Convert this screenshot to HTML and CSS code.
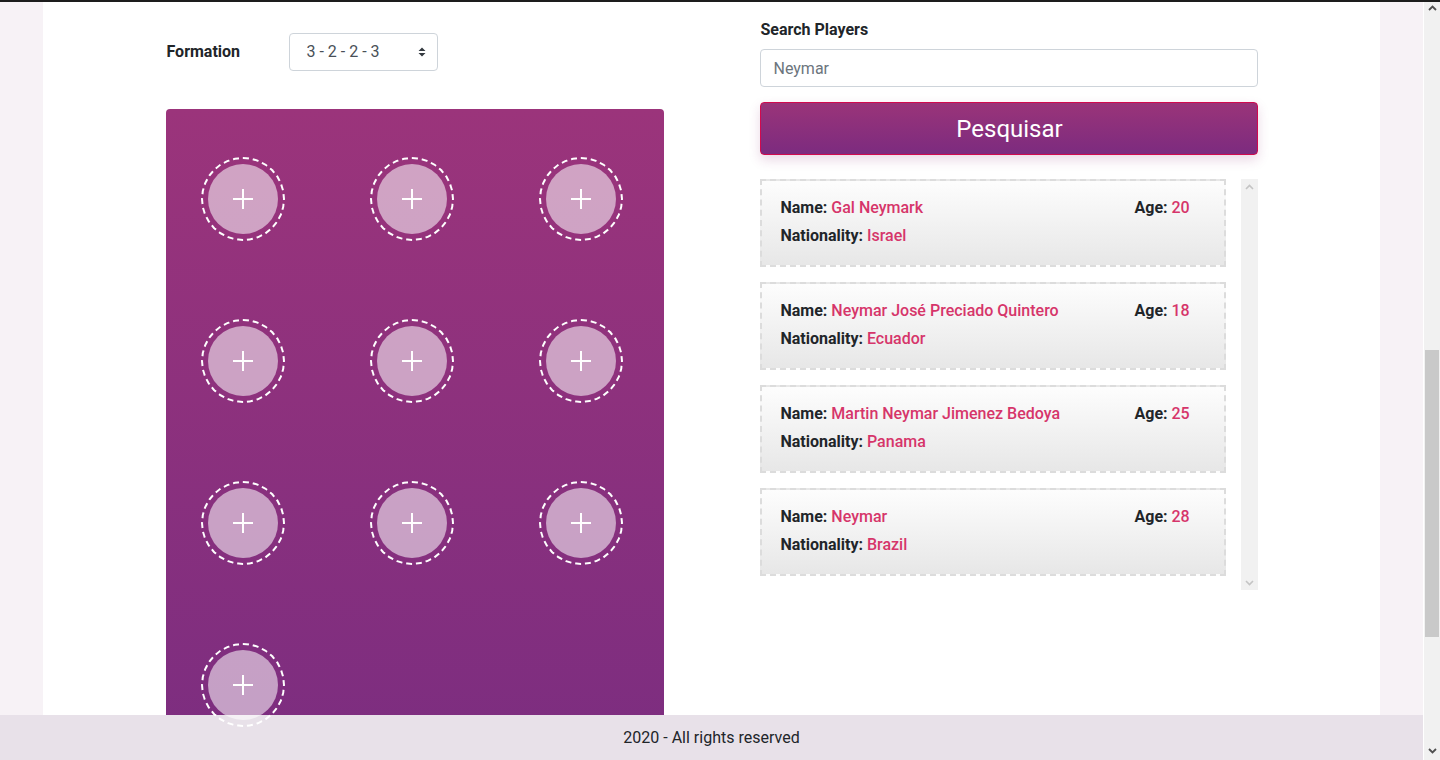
FILE: index.html
```html
<!DOCTYPE html>
<html lang="en">
<head>
<meta charset="utf-8">
<title>Team Builder</title>
<link rel="stylesheet" href="styles.css">
</head>
<body>
<div class="topline"></div>
<div class="viewport">
  <div class="page">
    <main class="main">
      <section class="left">
        <div class="formation-row">
          <label class="formation-label" for="formation">Formation</label>
          <div class="select-wrap">
            <select id="formation" class="select">
              <option>3 - 2 - 2 - 3</option>
              <option>3 - 4 - 3</option>
              <option>4 - 4 - 2</option>
            </select>
            <svg class="select-arrows" width="10" height="12" viewBox="0 0 10 12"><path d="M1.5 5 L5 1.5 L8.5 5 Z M1.5 7 L5 10.5 L8.5 7 Z" fill="#343a40"/></svg>
          </div>
        </div>
        <div class="field">
          <div class="slot"><div class="slot-inner"><svg width="22" height="22" viewBox="0 0 22 22"><path d="M11 1 V21 M1 11 H21" stroke="#fff" stroke-width="2"/></svg></div></div>
          <div class="slot"><div class="slot-inner"><svg width="22" height="22" viewBox="0 0 22 22"><path d="M11 1 V21 M1 11 H21" stroke="#fff" stroke-width="2"/></svg></div></div>
          <div class="slot"><div class="slot-inner"><svg width="22" height="22" viewBox="0 0 22 22"><path d="M11 1 V21 M1 11 H21" stroke="#fff" stroke-width="2"/></svg></div></div>
          <div class="slot"><div class="slot-inner"><svg width="22" height="22" viewBox="0 0 22 22"><path d="M11 1 V21 M1 11 H21" stroke="#fff" stroke-width="2"/></svg></div></div>
          <div class="slot"><div class="slot-inner"><svg width="22" height="22" viewBox="0 0 22 22"><path d="M11 1 V21 M1 11 H21" stroke="#fff" stroke-width="2"/></svg></div></div>
          <div class="slot"><div class="slot-inner"><svg width="22" height="22" viewBox="0 0 22 22"><path d="M11 1 V21 M1 11 H21" stroke="#fff" stroke-width="2"/></svg></div></div>
          <div class="slot"><div class="slot-inner"><svg width="22" height="22" viewBox="0 0 22 22"><path d="M11 1 V21 M1 11 H21" stroke="#fff" stroke-width="2"/></svg></div></div>
          <div class="slot"><div class="slot-inner"><svg width="22" height="22" viewBox="0 0 22 22"><path d="M11 1 V21 M1 11 H21" stroke="#fff" stroke-width="2"/></svg></div></div>
          <div class="slot"><div class="slot-inner"><svg width="22" height="22" viewBox="0 0 22 22"><path d="M11 1 V21 M1 11 H21" stroke="#fff" stroke-width="2"/></svg></div></div>
          <div class="slot"><div class="slot-inner"><svg width="22" height="22" viewBox="0 0 22 22"><path d="M11 1 V21 M1 11 H21" stroke="#fff" stroke-width="2"/></svg></div></div>
        </div>
      </section>
      <section class="right">
        <label class="search-label" for="search">Search Players</label>
        <input id="search" class="search-input" type="text" placeholder="Neymar">
        <button class="search-btn" type="button">Pesquisar</button>
        <div class="results">
          <div class="results-list">
            <div class="card">
              <div class="card-main">
                <div class="line"><b>Name:</b> <span class="val">Gal Neymark</span></div>
                <div class="line"><b>Nationality:</b> <span class="val">Israel</span></div>
              </div>
              <div class="card-age"><b>Age:</b> <span class="val">20</span></div>
            </div>
            <div class="card">
              <div class="card-main">
                <div class="line"><b>Name:</b> <span class="val">Neymar José Preciado Quintero</span></div>
                <div class="line"><b>Nationality:</b> <span class="val">Ecuador</span></div>
              </div>
              <div class="card-age"><b>Age:</b> <span class="val">18</span></div>
            </div>
            <div class="card">
              <div class="card-main">
                <div class="line"><b>Name:</b> <span class="val">Martin Neymar Jimenez Bedoya</span></div>
                <div class="line"><b>Nationality:</b> <span class="val">Panama</span></div>
              </div>
              <div class="card-age"><b>Age:</b> <span class="val">25</span></div>
            </div>
            <div class="card">
              <div class="card-main">
                <div class="line"><b>Name:</b> <span class="val">Neymar</span></div>
                <div class="line"><b>Nationality:</b> <span class="val">Brazil</span></div>
              </div>
              <div class="card-age"><b>Age:</b> <span class="val">28</span></div>
            </div>
          </div>
          <div class="mini-track">
            <svg width="9" height="6" viewBox="0 0 9 6"><path d="M1 5 L4.5 1.5 L8 5" fill="none" stroke="#c4c4c4" stroke-width="1.6"/></svg>
            <svg width="9" height="6" viewBox="0 0 9 6"><path d="M1 1 L4.5 4.5 L8 1" fill="none" stroke="#c4c4c4" stroke-width="1.6"/></svg>
          </div>
        </div>
      </section>
    </main>
  </div>
  <footer class="footer">2020 - All rights reserved</footer>
</div>
<div class="page-scrollbar">
  <svg class="sb-arrow" width="9" height="6" viewBox="0 0 9 6"><path d="M1 5 L4.5 1.5 L8 5" fill="none" stroke="#505050" stroke-width="1.8"/></svg>
  <div class="sb-track"><div class="sb-thumb"></div></div>
  <svg class="sb-arrow" width="9" height="6" viewBox="0 0 9 6"><path d="M1 1 L4.5 4.5 L8 1" fill="none" stroke="#505050" stroke-width="1.8"/></svg>
</div>
</body>
</html>
```
FILE: styles.css
```css
* { box-sizing: border-box; }
html, body { margin: 0; padding: 0; }
html, body { height: 760px; overflow: hidden; }
body {
  background: #f7f2f6;
  font-family: Roboto, "Liberation Sans", Arial, sans-serif;
  font-size: 16px;
  line-height: 1.5;
  color: #212529;
}
.topline {
  position: fixed;
  top: 0; left: 0; right: 0;
  height: 2px;
  background: #1d1d1d;
  z-index: 10;
}
.viewport {
  width: 1423px;
  height: 760px;
  position: relative;
  overflow: hidden;
}
.page {
  width: 94%;
  margin: 0 auto;
  background: #fff;
  height: 760px;
}
.main {
  display: grid;
  grid-template-columns: 498px 498px;
  column-gap: 96px;
  justify-content: center;
  align-items: start;
  padding-top: 18px;
  padding-left: 2px;
}
.left { padding-top: 14px; }
.formation-row {
  display: grid;
  grid-template-columns: 123px 149px;
  align-items: center;
}
.formation-label { font-weight: 700; line-height: 38px; padding-top: 1px; }
.select-wrap { position: relative; height: 38px; }
.select {
  appearance: none;
  -webkit-appearance: none;
  width: 149px;
  height: 38px;
  border: 1px solid #ced4da;
  border-radius: 4px;
  background: #fff;
  padding: 0 28px 0 16px;
  font-family: inherit;
  font-size: 16px;
  color: #495057;
}
.select-arrows {
  position: absolute;
  right: 11px;
  top: 13px;
  pointer-events: none;
}
.field {
  margin-top: 38px;
  height: 666px;
  border-radius: 4px 4px 0 0;
  background: linear-gradient(180deg, #9b347b 0%, #7b2d80 100%);
  padding: 48px 0 0 35px;
  display: grid;
  grid-template-columns: repeat(3, 84px);
  grid-auto-rows: 84px;
  column-gap: 85px;
  row-gap: 78px;
  align-content: start;
}
.slot {
  position: relative;
  z-index: 2;
  width: 84px;
  height: 84px;
  border: 2px dashed #fff;
  border-radius: 50%;
  display: flex;
  align-items: center;
  justify-content: center;
}
.slot-inner {
  width: 70px;
  height: 70px;
  border-radius: 50%;
  background: rgba(255, 255, 255, 0.55);
  display: flex;
  align-items: center;
  justify-content: center;
}
.slot-inner svg { display: block; }
.right { display: flex; flex-direction: column; }
.search-label { font-weight: 700; margin-bottom: 7px; }
.search-input {
  height: 38px;
  border: 1px solid #ced4da;
  border-radius: 4px;
  padding: 0 12px;
  font-family: inherit;
  font-size: 16px;
  color: #495057;
  background: #fff;
}
.search-input::placeholder { color: #6c757d; }
.search-btn {
  margin-top: 15px;
  height: 53px;
  border: 1px solid #d10a4e;
  border-radius: 4px;
  background: linear-gradient(180deg, #9a3479 0%, #7c2b7f 100%);
  color: #fff;
  font-family: inherit;
  font-size: 24px;
  box-shadow: 0 5px 12px rgba(140, 40, 110, 0.18);
}
.results {
  margin-top: 24px;
  height: 411px;
  display: flex;
}
.results-list {
  flex: 1;
  display: flex;
  flex-direction: column;
  gap: 15px;
  padding-right: 15px;
}
.mini-track {
  width: 17px;
  background: #f1f1f1;
  display: flex;
  flex-direction: column;
  justify-content: space-between;
  align-items: center;
  padding: 5px 0 4px;
}
.mini-track svg { display: block; }
.card {
  flex: none;
  height: 88px;
  border: 2px dashed #dcdcdc;
  background: linear-gradient(180deg, #fdfdfd 0%, #e7e7e7 100%);
  padding: 15px 20px 0 18px;
  display: grid;
  grid-template-columns: 1fr 70px;
}
.card-main { display: flex; flex-direction: column; gap: 4px; }
.val { color: #d6356a; font-weight: 500; }
.footer {
  position: absolute;
  left: 0; right: 0; bottom: 0;
  height: 45px;
  line-height: 45px;
  background: #e8e1e9;
  text-align: center;
  color: #212529;
  z-index: 1;
}
.page-scrollbar {
  position: fixed;
  top: 0; right: 0;
  width: 17px;
  height: 760px;
  background: #f1f1f1;
  border-left: 1px solid #fff;
  display: flex;
  flex-direction: column;
  align-items: center;
}
.sb-arrow { display: block; margin: 5px 0 6px; flex: none; }
.sb-track { flex: 1; width: 100%; position: relative; }
.sb-thumb {
  position: absolute;
  left: 1px; right: 1px;
  top: 333px;
  height: 287px;
  background: #c9c9c9;
}
```
